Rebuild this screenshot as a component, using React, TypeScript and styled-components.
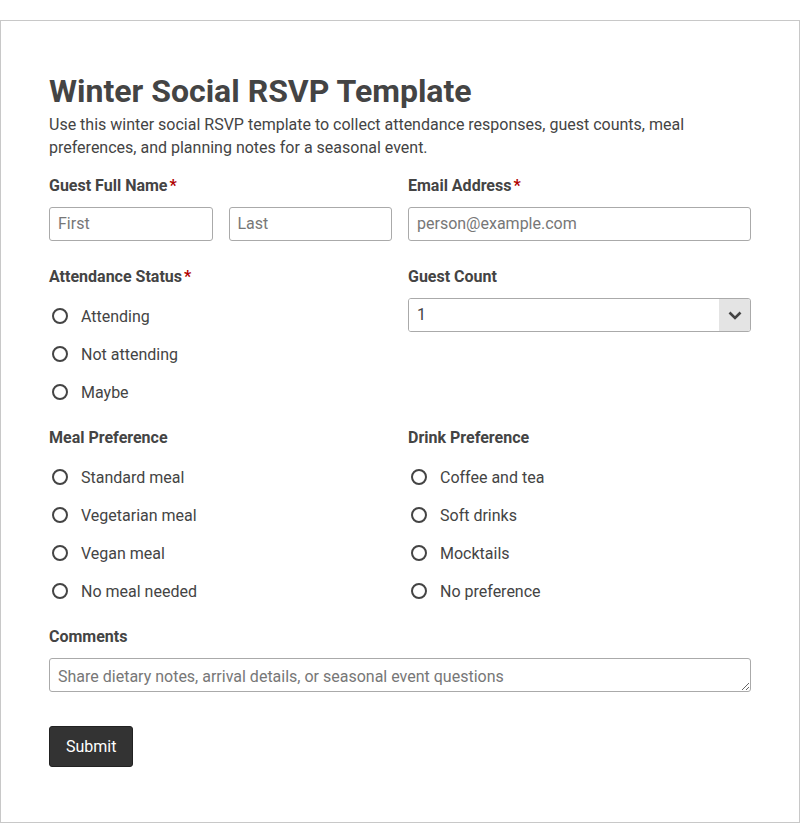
import { FC } from 'react'
import styled, { createGlobalStyle } from 'styled-components'

const GlobalStyle = createGlobalStyle`
  * {
    box-sizing: border-box;
  }
  body {
    margin: 0;
    font-family: Roboto, 'Liberation Sans', Arial, sans-serif;
    color: #444;
    background: #fff;
  }
`

type Option = string

const attendance: Option[] = ['Attending', 'Not attending', 'Maybe']
const meals: Option[] = ['Standard meal', 'Vegetarian meal', 'Vegan meal', 'No meal needed']
const drinks: Option[] = ['Coffee and tea', 'Soft drinks', 'Mocktails', 'No preference']

const RadioGroup: FC<{ name: string; options: Option[] }> = ({ name, options }) => (
  <RadioList>
    {options.map((opt) => (
      <RadioRow key={opt}>
        <HiddenRadio type="radio" name={name} value={opt} />
        <Circle />
        <span>{opt}</span>
      </RadioRow>
    ))}
  </RadioList>
)

const App: FC = () => {
  return (
    <>
      <GlobalStyle />
      <Card>
        <Title>Winter Social RSVP Template</Title>
        <Description>
          Use this winter social RSVP template to collect attendance responses, guest counts, meal
          preferences, and planning notes for a seasonal event.
        </Description>

        <form onSubmit={(e) => e.preventDefault()}>
          <Row $after={24}>
            <Field>
              <Label>
                Guest Full Name<Req>*</Req>
              </Label>
              <NameGrid>
                <Input placeholder="First" />
                <Input placeholder="Last" />
              </NameGrid>
            </Field>
            <Field>
              <Label>
                Email Address<Req>*</Req>
              </Label>
              <Input type="email" placeholder="person@example.com" />
            </Field>
          </Row>

          <Row $after={15}>
            <Field>
              <Label $gap={9}>
                Attendance Status<Req>*</Req>
              </Label>
              <RadioGroup name="attendance" options={attendance} />
            </Field>
            <Field>
              <Label>Guest Count</Label>
              <SelectBox>
                <Select defaultValue="1">
                  <option>1</option>
                  <option>2</option>
                  <option>3</option>
                  <option>4</option>
                  <option>5+</option>
                </Select>
                <ArrowBox>
                  <svg width="14" height="9" viewBox="0 0 14 9">
                    <path d="M1.5 1.5 L7 7 L12.5 1.5" fill="none" stroke="#444" strokeWidth="2.6" />
                  </svg>
                </ArrowBox>
              </SelectBox>
            </Field>
          </Row>

          <Row $after={15}>
            <Field>
              <Label $gap={9}>Meal Preference</Label>
              <RadioGroup name="meal" options={meals} />
            </Field>
            <Field>
              <Label $gap={9}>Drink Preference</Label>
              <RadioGroup name="drink" options={drinks} />
            </Field>
          </Row>

          <Field>
            <Label>Comments</Label>
            <TextArea rows={1} placeholder="Share dietary notes, arrival details, or seasonal event questions" />
          </Field>

          <Submit type="submit">Submit</Submit>
        </form>
      </Card>
    </>
  )
}

const Card = styled.div`
  width: 800px;
  margin-top: 20px;
  border: 1px solid #c8c8c8;
  padding: 51px 48px 55px;
`

const Title = styled.h1`
  margin: 0 0 3px;
  font-size: 32px;
  line-height: 1.2;
  font-weight: 700;
  color: #444;
`

const Description = styled.p`
  margin: 0 0 15px;
  font-size: 16px;
  line-height: 23px;
  color: #444;
`

const Row = styled.div<{ $after: number }>`
  display: grid;
  grid-template-columns: 1fr 1fr;
  column-gap: 16px;
  margin-bottom: ${(p) => p.$after}px;
`

const Field = styled.div`
  display: flex;
  flex-direction: column;
`

const Label = styled.label<{ $gap?: number }>`
  font-size: 16px;
  line-height: 23px;
  font-weight: 700;
  color: #444;
  margin-bottom: ${(p) => p.$gap ?? 10}px;
`

const Req = styled.span`
  color: #b00000;
  margin-left: 2px;
`

const NameGrid = styled.div`
  display: grid;
  grid-template-columns: 1fr 1fr;
  column-gap: 16px;
`

const Input = styled.input`
  width: 100%;
  height: 34px;
  padding: 3px 8px 5px;
  border: 1px solid #aaa;
  border-radius: 3px;
  font-family: inherit;
  font-size: 16px;
  color: #444;
  outline: none;
  &::placeholder {
    color: #777;
  }
`

const RadioList = styled.div`
  display: flex;
  flex-direction: column;
`

const RadioRow = styled.label`
  position: relative;
  display: flex;
  align-items: center;
  height: 38px;
  font-size: 16px;
  color: #444;
  cursor: pointer;
`

const HiddenRadio = styled.input`
  position: absolute;
  opacity: 0;
  width: 0;
  height: 0;
`

const Circle = styled.span`
  width: 16px;
  height: 16px;
  margin-left: 3px;
  margin-right: 13px;
  border: 2px solid #444;
  border-radius: 50%;
  flex-shrink: 0;
`

const SelectBox = styled.div`
  display: flex;
  height: 34px;
  border: 1px solid #aaa;
  border-radius: 3px;
  overflow: hidden;
`

const Select = styled.select`
  flex: 1;
  appearance: none;
  border: none;
  background: #fff;
  padding: 0 8px 2px;
  font-family: inherit;
  font-size: 16px;
  color: #444;
  outline: none;
`

const ArrowBox = styled.div`
  width: 31px;
  display: flex;
  align-items: center;
  justify-content: center;
  background: #e4e4e4;
  pointer-events: none;
`

const TextArea = styled.textarea`
  width: 100%;
  height: 34px;
  padding: 6px 8px 2px;
  border: 1px solid #aaa;
  border-radius: 3px;
  font-family: inherit;
  font-size: 16px;
  line-height: 24px;
  color: #444;
  resize: vertical;
  outline: none;
  &::placeholder {
    color: #777;
  }
`

const Submit = styled.button`
  margin-top: 34px;
  padding: 8px 16px;
  background: #333;
  color: #fff;
  border: 1px solid #222;
  border-radius: 3px;
  font-family: inherit;
  font-size: 16px;
  line-height: 23px;
  cursor: pointer;
`

export default App
